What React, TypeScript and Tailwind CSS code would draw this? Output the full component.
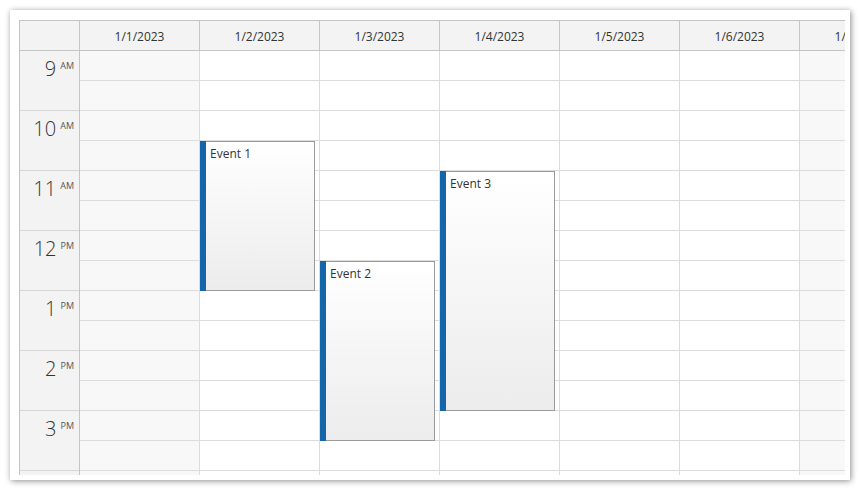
import React from 'react';

type CalEvent = {
  text: string;
  day: number;
  start: number; // hours after 9:00
  duration: number; // hours
};

const days = ['1/1/2023', '1/2/2023', '1/3/2023', '1/4/2023', '1/5/2023', '1/6/2023', '1/7/2023'];
const weekend = [true, false, false, false, false, false, true];

const hours = [
  { h: '9', p: 'AM' },
  { h: '10', p: 'AM' },
  { h: '11', p: 'AM' },
  { h: '12', p: 'PM' },
  { h: '1', p: 'PM' },
  { h: '2', p: 'PM' },
  { h: '3', p: 'PM' },
  { h: '4', p: 'PM' },
];

const events: CalEvent[] = [
  { text: 'Event 1', day: 1, start: 1.5, duration: 2.5 },
  { text: 'Event 2', day: 2, start: 3.5, duration: 3 },
  { text: 'Event 3', day: 3, start: 2, duration: 4 },
];

function EventBox({ ev }: { ev: CalEvent }) {
  return (
    <div
      className="absolute left-0 flex w-[115px]"
      style={{ top: ev.start * 60, height: ev.duration * 60 }}
    >
      <div className="w-[6px] bg-[#1466a9]" />
      <div className="flex-1 border border-l-0 border-[#9a9a9a] bg-gradient-to-b from-white to-[#ececec] pl-[4px] pt-[4px] text-[12px] leading-[16px] text-[#333]">
        {ev.text}
      </div>
    </div>
  );
}

export default function App() {
  return (
    <div className="h-[490px] w-[860px] bg-white pl-[10px] pt-[10px]" style={{ fontFamily: '"Open Sans", "Noto Sans", sans-serif' }}>
      <div className="flex h-[470px] w-[840px] flex-col bg-white pb-[5px] pl-[9px] pr-[5px] pt-[10px] shadow-[1px_1px_6px_rgba(0,0,0,0.45)]">
        <div className="flex flex-1 flex-col overflow-hidden border-l border-t border-[#c4c4c4]">
          {/* header */}
          <div className="flex h-[30px] shrink-0 border-b border-[#c4c4c4] bg-[#f3f3f3]">
            <div className="w-[60px] shrink-0 border-r border-[#c4c4c4]" />
            {days.map((d) => (
              <div
                key={d}
                className="flex w-[120px] shrink-0 items-center justify-center border-r border-[#c4c4c4] pt-[2px] text-[12px] text-[#333]"
              >
                {d}
              </div>
            ))}
          </div>

          {/* body */}
          <div className="flex flex-1 overflow-hidden">
            <div className="w-[60px] shrink-0 border-r border-[#c4c4c4] bg-[#f3f3f3]">
              {hours.map((hr) => (
                <div key={hr.h} className="flex h-[60px] justify-end border-b border-[#d6d6d6] pr-[5px] pt-[8px] text-[#333]">
                  <span className="text-[20px] font-light leading-[20px]">{hr.h}</span>
                  <span className="ml-[4px] pt-[1px] text-[9px] leading-[12px] text-[#555]">{hr.p}</span>
                </div>
              ))}
            </div>
            {days.map((d, i) => (
              <div
                key={d}
                className={`relative w-[120px] shrink-0 border-r border-[#dcdcdc] ${weekend[i] ? 'bg-[#f8f8f8]' : 'bg-white'}`}
              >
                {Array.from({ length: 16 }).map((_, r) => (
                  <div key={r} className="h-[30px] border-b border-[#dcdcdc]" />
                ))}
                {events
                  .filter((e) => e.day === i)
                  .map((e) => (
                    <EventBox key={e.text} ev={e} />
                  ))}
              </div>
            ))}
          </div>
        </div>
      </div>
    </div>
  );
}
